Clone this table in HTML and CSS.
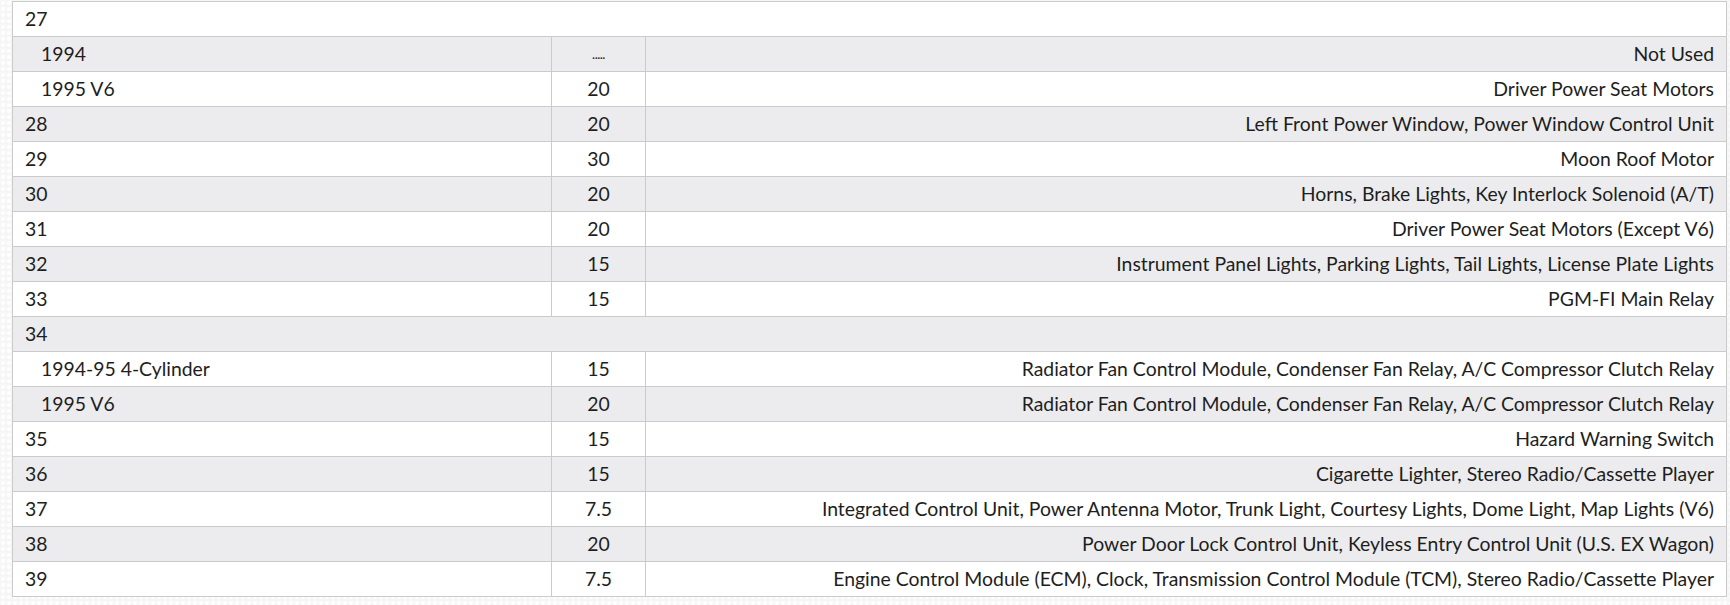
FILE: index.html
```html
<!DOCTYPE html>
<html>
<head>
<meta charset="utf-8">
<link rel="stylesheet" href="styles.css">
</head>
<body>
<div class="page">
<table class="fuse">
<colgroup><col class="c1"><col class="c2"><col class="c3"></colgroup>
<tbody>
<tr><td colspan="3">27</td></tr>
<tr><td class="sub">1994</td><td class="amp dots">.....</td><td class="desc">Not Used</td></tr>
<tr><td class="sub">1995 V6</td><td class="amp">20</td><td class="desc">Driver Power Seat Motors</td></tr>
<tr><td>28</td><td class="amp">20</td><td class="desc">Left Front Power Window, Power Window Control Unit</td></tr>
<tr><td>29</td><td class="amp">30</td><td class="desc">Moon Roof Motor</td></tr>
<tr><td>30</td><td class="amp">20</td><td class="desc">Horns, Brake Lights, Key Interlock Solenoid (A/T)</td></tr>
<tr><td>31</td><td class="amp">20</td><td class="desc">Driver Power Seat Motors (Except V6)</td></tr>
<tr><td>32</td><td class="amp">15</td><td class="desc">Instrument Panel Lights, Parking Lights, Tail Lights, License Plate Lights</td></tr>
<tr><td>33</td><td class="amp">15</td><td class="desc">PGM-FI Main Relay</td></tr>
<tr><td colspan="3">34</td></tr>
<tr><td class="sub">1994-95 4-Cylinder</td><td class="amp">15</td><td class="desc">Radiator Fan Control Module, Condenser Fan Relay, A/C Compressor Clutch Relay</td></tr>
<tr><td class="sub">1995 V6</td><td class="amp">20</td><td class="desc">Radiator Fan Control Module, Condenser Fan Relay, A/C Compressor Clutch Relay</td></tr>
<tr><td>35</td><td class="amp">15</td><td class="desc">Hazard Warning Switch</td></tr>
<tr><td>36</td><td class="amp">15</td><td class="desc">Cigarette Lighter, Stereo Radio/Cassette Player</td></tr>
<tr><td>37</td><td class="amp">7.5</td><td class="desc">Integrated Control Unit, Power Antenna Motor, Trunk Light, Courtesy Lights, Dome Light, Map Lights (V6)</td></tr>
<tr><td>38</td><td class="amp">20</td><td class="desc">Power Door Lock Control Unit, Keyless Entry Control Unit (U.S. EX Wagon)</td></tr>
<tr><td>39</td><td class="amp">7.5</td><td class="desc">Engine Control Module (ECM), Clock, Transmission Control Module (TCM), Stereo Radio/Cassette Player</td></tr>
</tbody>
</table>
</div>
</body>
</html>
```

FILE: styles.css
```css
html, body {
  margin: 0;
  padding: 0;
}
body {
  background-color: #f6f6f6;
  background-image: radial-gradient(circle at 3px 3px, #ffffff 1.5px, transparent 2.5px);
  background-size: 6px 6px;
  width: 1730px;
  height: 605px;
  overflow: hidden;
}
.page {
  padding: 1px 4px 0 12px;
}
.fuse {
  width: 1715px;
  border-collapse: collapse;
  table-layout: fixed;
  font-family: "Lato", "Noto Sans", sans-serif;
  font-size: 19.4px;
  color: #1e1e1e;
  background: #ffffff;
  border: 1px solid #cbcbcb;
}
.c1 {
  width: 539px;
}
.c2 {
  width: 94px;
}
.fuse td {
  border: 1px solid #cbcbcb;
  padding: 5px 12px;
  line-height: 24px;
  height: 24px;
  white-space: nowrap;
  overflow: hidden;
  text-align: left;
}
.fuse td.amp {
  text-align: center;
}
.fuse td.desc {
  text-align: right;
}
.fuse td.sub {
  padding-left: 28px;
}
.fuse td.dots {
  font-size: 13px;
  letter-spacing: -0.5px;
}
.fuse tr:nth-child(even) td {
  background: #ececee;
}
```
